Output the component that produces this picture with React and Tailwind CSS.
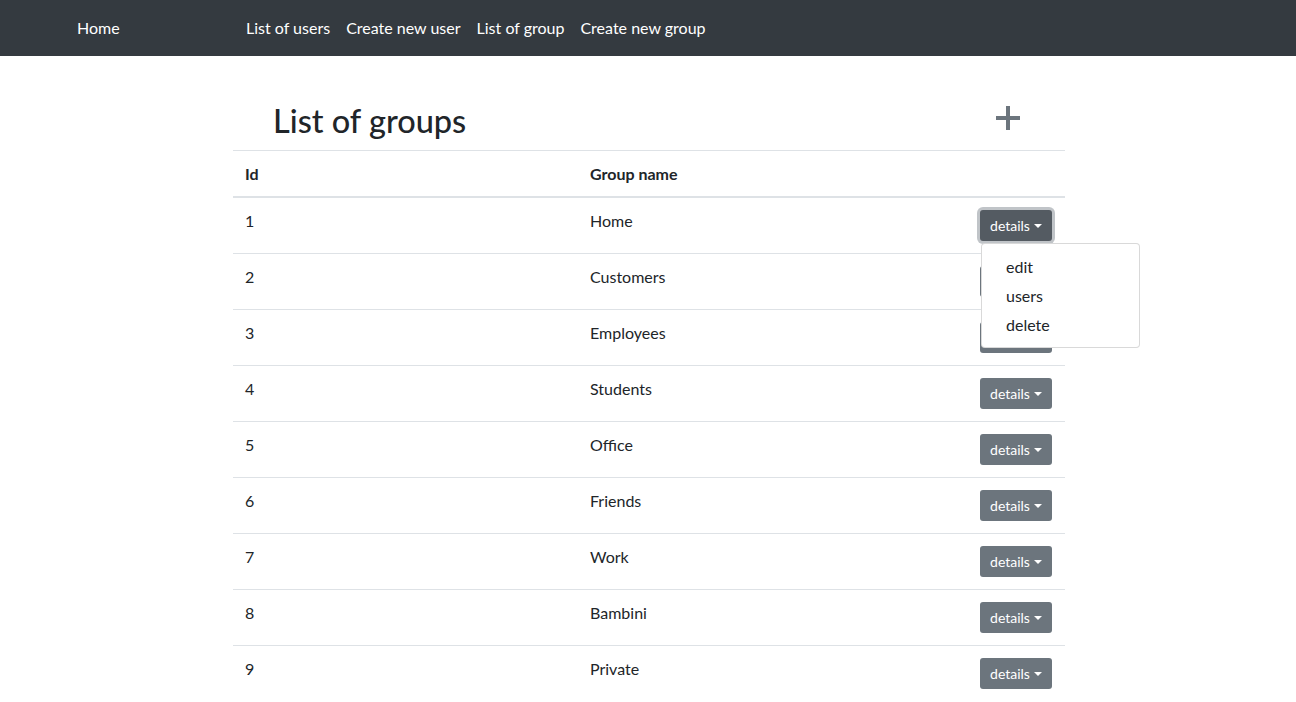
import { useState } from "react";

const groups = [
  { id: 1, name: "Home" },
  { id: 2, name: "Customers" },
  { id: 3, name: "Employees" },
  { id: 4, name: "Students" },
  { id: 5, name: "Office" },
  { id: 6, name: "Friends" },
  { id: 7, name: "Work" },
  { id: 8, name: "Bambini" },
  { id: 9, name: "Private" },
];

function DetailsButton({ open, onToggle }) {
  return (
    <div className="relative">
      <button
        onClick={onToggle}
        className={`flex items-center justify-center w-[72px] h-[31px] rounded-[3px] text-sm text-white leading-[21px] ${
          open
            ? "bg-[#545b62] shadow-[0_0_0_3px_rgba(130,138,145,0.5)]"
            : "bg-[#6c757d]"
        }`}
      >
        details
        <span className="ml-[4px] w-0 h-0 border-t-[4px] border-t-white border-x-[4px] border-x-transparent" />
      </button>
      {open && (
        <div className="absolute left-[1px] top-[33px] z-10 w-[159px] py-2 bg-white border border-[rgba(0,0,0,0.15)] rounded">
          {["edit", "users", "delete"].map(item => (
            <div key={item} className="h-[29px] flex items-center px-6 text-[#212529] text-base">
              {item}
            </div>
          ))}
        </div>
      )}
    </div>
  );
}

export default function App() {
  const [openId, setOpenId] = useState(1);

  return (
    <div
      className="min-h-screen bg-white text-[#212529]"
      style={{ fontFamily: "'Segoe UI', Lato, 'Liberation Sans', sans-serif" }}
    >
      {/* Navbar */}
      <nav className="h-14 bg-[#343a40] flex items-center text-white text-base">
        <div className="w-[238px] pl-[77px]">Home</div>
        <div className="flex">
          <a className="px-2">List of users</a>
          <a className="px-2">Create new user</a>
          <a className="px-2">List of group</a>
          <a className="px-2">Create new group</a>
        </div>
      </nav>

      <div className="w-[832px] ml-[233px]">
        {/* Title */}
        <div className="flex items-start justify-between pt-[46px] pb-[10px] pl-[40px] pr-[45px]">
          <h2 className="text-[32.5px] leading-[38px] font-medium">List of groups</h2>
          <svg width="24" height="24" viewBox="0 0 24 24" className="mt-[4px]">
            <path d="M12 0v24M0 12h24" stroke="#6c757d" strokeWidth="4" />
          </svg>
        </div>

        {/* Table */}
        <div className="border-t border-[#dee2e6]">
          <div className="grid grid-cols-[345px_1fr_auto] h-[47px] border-b-2 border-[#dee2e6] font-bold">
            <div className="px-3 pt-[11px]">Id</div>
            <div className="px-3 pt-[11px]">Group name</div>
            <div className="px-3" />
          </div>
          {groups.map(g => (
            <div key={g.id} className="grid grid-cols-[345px_1fr_auto] border-b border-[#dee2e6] last:border-b-0">
              <div className="px-3 pt-[11px] leading-6">{g.id}</div>
              <div className="px-3 pt-[11px] leading-6">{g.name}</div>
              <div className="pl-3 pr-[13px] py-3">
                <DetailsButton
                  open={openId === g.id}
                  onToggle={() => setOpenId(openId === g.id ? null : g.id)}
                />
              </div>
            </div>
          ))}
        </div>
      </div>
    </div>
  );
}
